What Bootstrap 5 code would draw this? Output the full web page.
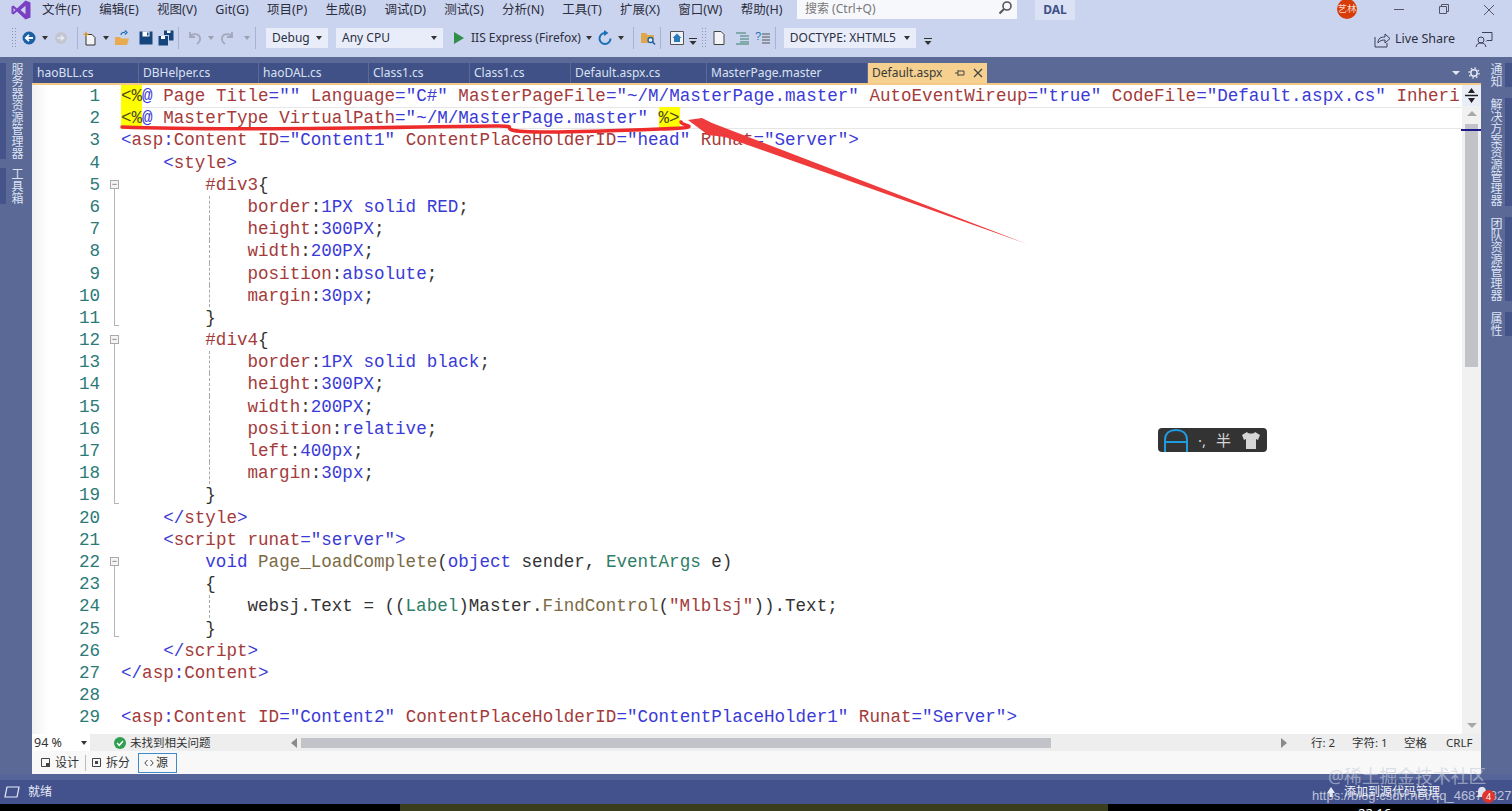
<!DOCTYPE html>
<html lang="zh">
<head>
  <meta charset="UTF-8">
  <title>Default.aspx - Visual Studio</title>
  <meta name="viewport" content="width=device-width, initial-scale=1">
  <link href="https://cdn.jsdelivr.net/npm/bootstrap@5.3.0/dist/css/bootstrap.min.css" rel="stylesheet">
  <style>
    html, body { height: 100%; }
    body {
      background: #5b6996;
      overflow: hidden;
      font-family: "Noto Sans", "Noto Sans CJK SC", sans-serif;
      font-size: 12px;
      color: #2b2f3f;
    }
    .vs-page { height: 811px; position: relative; overflow: hidden; }

    /* title + toolbar */
    .vs-top { background: #cbd4ee; height: 57px; flex: none; }
    .vs-menu { height: 22px; padding-left: 42px; }
    .vs-logo { position: absolute; left: 11px; top: 0; }
    .menu-list { width: 755px; gap: 18.3px; flex: none; }
    .menu-item { white-space: nowrap; line-height: 19px; font-size: 12.5px; flex: none; }
    .vs-search { width: 220px; height: 19px; background: #f7f8fc; color: #777; padding-left: 8px; line-height: 18px; flex: none; }
    .vs-dal { width: 40px; height: 20px; background: #dbe2f6; margin-left: 18px; color: #3f5187; font-weight: 700; line-height: 20px; text-align: center; flex: none; }
    .vs-avatar { width: 20px; height: 20px; border-radius: 50%; background: #d83b07; color: #f7d9cc; font-size: 9.5px; line-height: 20px; text-align: center; margin-left: 262px; flex: none; position: relative; top: -1px; }
    .win-btn { width: 45px; flex: none; }
    .win-first { margin-left: 19px; }
    .vs-tools { height: 35px; padding: 0 0 3px 11px; gap: 4px; }
    .t-grip { width: 6px; height: 22px; flex: none; background-image: radial-gradient(#8d94ad 1px, transparent 1px); background-size: 3px 3px; }
    .t-ic { width: 16px; height: 16px; flex: none; display: block; }
    .t-drop { width: 8px; height: 16px; flex: none; display: flex; align-items: center; justify-content: center; }
    .t-drop::after { content: ""; border: 3px solid transparent; border-top: 4px solid #333; border-bottom: 0; }
    .t-drop-off::after { border-top-color: #9aa0b3; }
    .t-more { width: 8px; height: 8px; flex: none; margin-top: 6px; }
    .t-sep { width: 1px; height: 22px; background: #aab2cf; flex: none; }
    .t-nudge { margin-left: 2px; }
    .t-select { height: 20px; background: #e9edfa; padding: 0 6px; line-height: 20px; font-size: 12px; flex: none; }
    .t-select::after { content: ""; border: 3px solid transparent; border-top: 4px solid #333; border-bottom: 0; }
    .sel-debug { width: 62px; margin-left: 6px; }
    .sel-cpu { width: 107px; margin-left: 4px; }
    .sel-doc { width: 132px; margin-left: 4px; }
    .t-text { white-space: nowrap; font-size: 12px; flex: none; }
    .t-share { font-size: 12.5px; white-space: nowrap; margin-top: 3px; }
    .t-feedback { margin-left: 20px; margin-right: 19px; }

    /* middle */
    .vs-body { flex: 1 1 auto; min-height: 0; background: #5b6996; }
    .side-left { width: 32px; flex: none; padding-top: 6px; position: relative; }
    .side-right { width: 31px; flex: none; padding-top: 6px; position: relative; }
    .side-tab { writing-mode: vertical-rl; color: #dde3f5; font-size: 12px; line-height: 14px; white-space: nowrap; position: relative; }
    .side-left .side-tab { padding-right: 9px; margin-bottom: 9px; }
    .side-left .side-tab::before { content: ""; position: absolute; left: 0; top: 0; bottom: 0; width: 6px; background: #44548a; }
    .side-right .side-tab { padding-right: 10px; margin-bottom: 11px; }
    .side-right .side-tab::after { content: ""; position: absolute; right: 0; top: 0; bottom: 0; width: 7px; background: #44548a; }
    .doc-wrap { flex: 1 1 auto; min-width: 0; padding-top: 6px; }

    .tab-strip { height: 22px; flex: none; padding-left: 1px; border-bottom: 2px solid #f2c987; }
    .doc-tab { height: 20px; background: #3f5187; color: #dbe1f3; line-height: 20px; padding-left: 4px; margin-right: 1px; white-space: nowrap; flex: none; font-size: 12px; }
    .tw-a { width: 105px; } .tw-b { width: 119px; } .tw-c { width: 109px; } .tw-d { width: 100px; }
    .tw-e { width: 135px; } .tw-f { width: 160px; } .tw-g { width: 119px; }
    .doc-tab.is-active { background: #f5d08f; color: #3a3a3a; }
    .tab-tools { width: 50px; gap: 7px; padding-right: 1px; }

    .edit-main { flex: 1 1 auto; min-height: 0; background: #fff; }
    .code-pane { flex: 1 1 auto; min-width: 0; overflow: hidden; background: linear-gradient(90deg, #f1f1f1 0, #fff 16px); }
    .code-row { display: flex; height: 22.2px; line-height: 22.2px; font-family: "Liberation Mono", "Courier New", monospace; font-size: 17.57px; white-space: pre; }
    .ln-num { width: 68px; text-align: right; color: #2b7a78; flex: none; }
    .fold-cell { width: 21px; flex: none; position: relative; }
    .fold-cell.f-line::before, .fold-cell.f-end::before, .fold-cell.f-box::before { content: ""; position: absolute; left: 14px; top: 0; bottom: 0; border-left: 1px solid #b5b5b5; }
    .fold-cell.f-box::before { top: 14px; }
    .fold-cell.f-end::before { bottom: 3px; width: 5px; border-bottom: 1px solid #b5b5b5; }
    .fold-cell.f-box::after { content: "−"; font: 9px/7px "Liberation Sans", sans-serif; color: #666; text-align: center; position: absolute; left: 10px; top: 6px; width: 9px; height: 9px; border: 1px solid #aaa; background: #f4f4f4; }
    .code-text { flex: 1 1 auto; position: relative; color: #333; }
    .code-text.g-dash::before { content: ""; position: absolute; left: 88px; top: 0; bottom: 0; border-left: 1px dashed #aaa; }
    .code-row.is-current .code-text { box-shadow: inset 0 1px 0 #e6e6e6, inset 0 -1px 0 #e6e6e6; }
    .c-b { color: #3a3ad6; } .c-r { color: #a33b3b; } .c-t { color: #2f7d66; } .c-m { color: #7c6a45; }
    .c-y { background: #ffff00; color: #4a4a20; display: inline-block; height: 22.2px; }

    .vs-scroll { width: 19px; flex: none; background: #f1f1f1; position: relative; }
    .split-btn { height: 21px; background: #e8edf8; display: flex; align-items: center; justify-content: center; }
    .scr-up { height: 14px; display: flex; justify-content: center; align-items: center; }
    .scr-down { height: 18px; display: flex; justify-content: center; align-items: center; }
    .scr-up::after { content: ""; border: 5px solid transparent; border-bottom: 5px solid #a9a9a9; border-top: 0; }
    .scr-down::after { content: ""; border: 5px solid transparent; border-top: 5px solid #a9a9a9; border-bottom: 0; }
    .scr-track { flex: 1 1 auto; padding: 4px 3px 0; position: relative; }
    .scr-thumb { height: 243px; background: #c2c3c9; }
    .scr-mark { position: absolute; left: -1px; right: 0; top: 9px; height: 2px; background: #1a1a8c; }

    .edit-stat { height: 17px; background: #eeeeee; flex: none; line-height: 17px; color: #333; font-size: 11.5px; }
    .zoom-box { width: 58px; height: 17px; background: #fff; padding-left: 2px; flex: none; position: relative; font-size: 12.5px; }
    .zoom-box::after { content: ""; position: absolute; right: 3px; top: 7px; border: 3px solid transparent; border-top: 4px solid #333; border-bottom: 0; }
    .stat-ok { margin-left: 24px; width: 177px; flex: none; gap: 4px; }
    .hs-left, .hs-right { width: 0; height: 0; border: 5px solid transparent; flex: none; }
    .hs-left { border-right: 6px solid #8a8a8a; border-left: 0; }
    .hs-right { border-left: 6px solid #8a8a8a; border-right: 0; margin-left: 230px; }
    .hs-thumb { width: 750px; height: 10px; background: #c2c3c9; margin-left: 4px; flex: none; }
    .stat-pos { width: 41px; flex: none; white-space: nowrap; }
    .stat-pos2 { width: 52px; flex: none; white-space: nowrap; }
    .stat-pos3 { width: 42px; flex: none; white-space: nowrap; }
    .edit-views { height: 23px; background: #f8f8f9; flex: none; padding-left: 4px; font-size: 12px; line-height: 22px; color: #333; }
    .view-btn { height: 20px; line-height: 18px; padding: 0 5px; gap: 5px; flex: none; }
    .view-btn.is-on { border: 1px solid #3f8ac9; margin-left: 3px; width: 39px; gap: 2px; }
    .view-div { width: 1px; height: 16px; background: #bbb; flex: none; margin: 0 1px 0 1px; }

    .strip-gap { height: 6px; background: #55659a; flex: none; }
    .vs-status { height: 24px; background: #43528c; color: #e8ecf8; flex: none; padding-left: 4px; font-size: 12px; gap: 8px; }
    .status-add { margin-left: auto; margin-right: 72px; color: #f2f4fb; gap: 8px; white-space: nowrap; }
    .vs-task { height: 7px; flex: none; background: #000; overflow: hidden; color: #fff; font-size: 13px; line-height: 13px; }
    .task-green { margin-left: 400px; width: 708px; background: #3a3e1c; flex: none; }
    .task-time { margin-left: 250px; padding-top: 3px; }

    /* things lying over the window */
    .ime-bar { position: absolute; left: 1158px; top: 428px; width: 109px; height: 24px; background: #333; border-radius: 4px; color: #d6d6d6; font-size: 15px; line-height: 24px; padding-left: 6px; gap: 10px; }
    .mark-over { position: absolute; left: 0; top: 0; pointer-events: none; }
    .wm-title { position: absolute; left: 1328px; top: 765px; color: rgba(200,205,220,.62); font-size: 17.8px; white-space: nowrap; line-height: 22px; }
    .wm-url { position: absolute; left: 1312px; top: 788px; color: rgba(225,228,238,.78); font-family: "Liberation Sans", sans-serif; font-size: 13px; white-space: nowrap; line-height: 16px; }
    .st-badge { position: absolute; left: 1482px; top: 790px; width: 13px; height: 13px; border-radius: 50%; background: #e0332b; color: #fff; font-size: 9px; line-height: 13px; text-align: center; }
    .st-bell { position: absolute; left: 1475px; top: 786px; }
  </style>
</head>
<body>
<div class="vs-page d-flex flex-column">

  <div class="vs-top d-flex flex-column">
    <div class="vs-menu d-flex align-items-start">
      <svg class="vs-logo" width="20" height="20" viewBox="0 0 20 20"><path d="M14.5 0.5 19.5 2.5V17.5L14.5 19.5 6 11.5 2.5 14.5.5 13.5V6.5L2.5 5.5 6 8.5ZM14.5 5.8 9.5 10l5 4.2ZM2.5 8v4L4.5 10Z" fill="#7b3fc4"/></svg>
      <div class="menu-list d-flex">
        <div class="menu-item">文件(F)</div>
        <div class="menu-item">编辑(E)</div>
        <div class="menu-item">视图(V)</div>
        <div class="menu-item">Git(G)</div>
        <div class="menu-item">项目(P)</div>
        <div class="menu-item">生成(B)</div>
        <div class="menu-item">调试(D)</div>
        <div class="menu-item">测试(S)</div>
        <div class="menu-item">分析(N)</div>
        <div class="menu-item">工具(T)</div>
        <div class="menu-item">扩展(X)</div>
        <div class="menu-item">窗口(W)</div>
        <div class="menu-item">帮助(H)</div>
      </div>
      <div class="vs-search d-flex justify-content-between">
        <span>搜索 (Ctrl+Q)</span>
        <svg width="16" height="16" viewBox="0 0 16 16" class="me-1"><circle cx="10" cy="6" r="4" fill="none" stroke="#555" stroke-width="1.6"/><path d="M7 9 2.5 13.5" stroke="#555" stroke-width="2"/></svg>
      </div>
      <div class="vs-dal">DAL</div>
      <div class="vs-avatar">艺林</div>
      <div class="win-btn win-first d-flex justify-content-center"><svg width="12" height="18" viewBox="0 0 12 18"><path d="M1 9.5H11" stroke="#556" stroke-width="1"/></svg></div>
      <div class="win-btn d-flex justify-content-center"><svg width="12" height="18" viewBox="0 0 12 18"><path d="M1.5 6.5h7v7h-7zM3.5 6.5v-2h7v7h-2" fill="none" stroke="#556"/></svg></div>
      <div class="win-btn d-flex justify-content-center"><svg width="12" height="18" viewBox="0 0 12 18"><path d="M1 5 11 15M11 5 1 15" stroke="#556"/></svg></div>
    </div>
    <div class="vs-tools d-flex align-items-center">
      <div class="t-grip"></div>
      <svg class="t-ic" viewBox="0 0 16 16"><circle cx="8" cy="8" r="6.5" fill="#1b5fa5"/><path d="M12 8H5M8 4.8 4.8 8 8 11.2" fill="none" stroke="#fff" stroke-width="1.8"/></svg>
      <div class="t-drop"></div>
      <svg class="t-ic" viewBox="0 0 16 16"><circle cx="8" cy="8" r="6" fill="#c3c6cf"/><path d="M4.5 8h6M8 5.5 10.5 8 8 10.5" fill="none" stroke="#e8eaf2" stroke-width="1.5"/></svg>
      <div class="t-sep ms-1"></div>
      <svg class="t-ic" viewBox="0 0 16 16"><path d="M4 4.5h6l3 3V15H4Z" fill="#f3f4f8" stroke="#333"/><path d="M4 1 5 3.5 7.5 4 5 5 4 7.5 3 5 .5 4 3 3.5Z" fill="#d9962c"/></svg>
      <div class="t-drop"></div>
      <svg class="t-ic" viewBox="0 0 16 16"><path d="M1 7h5l1 1.5h8L13 15H1Z" fill="#e8ab4f"/><path d="M7 5C7 3 9 2 11 2.5M11 .5l2 2-2 2" fill="none" stroke="#1b6fb5" stroke-width="1.3"/></svg>
      <svg class="t-ic ms-1" viewBox="0 0 16 16"><path d="M1.5 1.5h13v13h-13Z" fill="#16457e"/><path d="M4.5 1.5h7v5h-7Z" fill="#fff"/><path d="M9 2.5h1.5v3H9Z" fill="#16457e"/></svg>
      <svg class="t-ic" viewBox="0 0 16 16"><path d="M.5 6h9.500v9.500H.5Z" fill="#16457e"/><path d="M3 6h4v3H3Z" fill="#fff"/><path d="M6 .5h9.500v10H11V5H6Z" fill="#16457e"/><path d="M9 .5h3.500v2.500H9Z" fill="#fff"/></svg>
      <div class="t-sep"></div>
      <svg class="t-ic ms-1" viewBox="0 0 16 16"><path d="M3 2v5h5M3 7c2-4 9-4 10 1 .4 2.500-1 4.500-3 6" fill="none" stroke="#a3a8ba" stroke-width="1.8"/></svg>
      <div class="t-drop t-drop-off"></div>
      <svg class="t-ic" viewBox="0 0 16 16"><path d="M13 2v5H8M13 7C11 3 4 3 3 8c-.4 2.500 1 4.500 3 6" fill="none" stroke="#a3a8ba" stroke-width="1.8"/></svg>
      <div class="t-drop t-drop-off ms-1"></div>
      <div class="t-sep"></div>
      <div class="t-select sel-debug d-flex justify-content-between align-items-center">Debug</div>
      <div class="t-select sel-cpu d-flex justify-content-between align-items-center">Any CPU</div>
      <svg class="t-ic ms-1" viewBox="0 0 16 16"><path d="M3 2 13 8 3 14Z" fill="#2f8f46"/></svg>
      <span class="t-text">IIS Express (Firefox)</span>
      <div class="t-drop"></div>
      <svg class="t-ic" viewBox="0 0 16 16"><path d="M13.500 8.500A5.500 5.500 0 1 1 8 3" fill="none" stroke="#1b6fb5" stroke-width="2"/><path d="M7 0 11.500 3 7 6Z" fill="#1b6fb5"/></svg>
      <div class="t-drop"></div>
      <div class="t-sep ms-1"></div>
      <svg class="t-ic t-nudge" viewBox="0 0 16 16"><path d="M1 3h5l1.500 2H14v8H1Z" fill="#dfa64e"/><circle cx="10.500" cy="10" r="2.500" fill="#e8eefb" stroke="#1b5fa5" stroke-width="1.300"/><path d="M12.500 12 15 14.500" stroke="#1b5fa5" stroke-width="1.600"/></svg>
      <div class="t-sep"></div>
      <svg class="t-ic ms-1" viewBox="0 0 16 16"><path d="M1.500 1.500h13v13h-13Z" fill="#eef1fa" stroke="#555"/><path d="M8 3.500 12.500 8H11v4H5V8H3.500Z" fill="#2a7ab8"/></svg>
      <svg class="t-more" viewBox="0 0 8 8"><path d="M0 1.500h8" stroke="#333"/><path d="M.5 4h7L4 8Z" fill="#333"/></svg>
      <div class="t-grip"></div>
      <svg class="t-ic" viewBox="0 0 16 16"><path d="M3 1.500h7l3 3v10H3Z" fill="#f3f4f8" stroke="#444"/></svg>
      <svg class="t-ic ms-1" viewBox="0 0 16 16"><path d="M1 3h10M5 6h9M5 9h9M5 12h9M1 14h13" stroke="#3d7f6c"/></svg>
      <svg class="t-ic" viewBox="0 0 16 16"><text x="0" y="10" font-size="11" fill="#1b6fb5" font-family="Liberation Sans">?</text><path d="M7 4h8M7 7h8M7 10h8M7 13h8" stroke="#555"/></svg>
      <div class="t-sep"></div>
      <div class="t-select sel-doc d-flex justify-content-between align-items-center">DOCTYPE: XHTML5</div>
      <svg class="t-more ms-1" viewBox="0 0 8 8"><path d="M0 1.500h8" stroke="#333"/><path d="M.5 4h7L4 8Z" fill="#333"/></svg>
      <div class="t-share ms-auto d-flex align-items-center">
        <svg width="18" height="18" viewBox="0 0 18 18"><path d="M2 6v10h12v-4M5 12c0-5 3-6 7-6V3l5 4.500-5 4.500V9c-3 0-5 .5-7 3Z" fill="none" stroke="#3a3f55"/></svg>
        <span class="ms-1">Live Share</span>
        <svg class="t-feedback" width="18" height="18" viewBox="0 0 18 18"><circle cx="6" cy="9" r="3" fill="none" stroke="#3a3f55"/><path d="M1 16c.5-3 2.500-4 5-4s4.500 1 5 4M7 1.500h10v8h-5l-1 1" fill="none" stroke="#3a3f55"/></svg>
      </div>
    </div>
  </div>

  <div class="vs-body d-flex">
    <div class="side-left d-flex flex-column">
      <div class="side-tab">服务器资源管理器</div>
      <div class="side-tab">工具箱</div>
    </div>
    <div class="doc-wrap d-flex flex-column">
      <div class="tab-strip d-flex">
        <div class="doc-tab tw-a">haoBLL.cs</div>
        <div class="doc-tab tw-b">DBHelper.cs</div>
        <div class="doc-tab tw-c">haoDAL.cs</div>
        <div class="doc-tab tw-d">Class1.cs</div>
        <div class="doc-tab tw-d">Class1.cs</div>
        <div class="doc-tab tw-e">Default.aspx.cs</div>
        <div class="doc-tab tw-f">MasterPage.master</div>
        <div class="doc-tab tw-g is-active d-flex justify-content-between pe-1">
          <span>Default.aspx</span>
          <span class="d-flex align-items-center gap-2">
            <svg width="10" height="10" viewBox="0 0 10 10"><path d="M0 5h3M3 2v6M3 3h6M3 7h6M9 3v4" fill="none" stroke="#444"/></svg>
            <svg width="10" height="10" viewBox="0 0 10 10"><path d="M1 1 9 9M9 1 1 9" stroke="#444" stroke-width="1.300"/></svg>
          </span>
        </div>
        <div class="tab-tools ms-auto d-flex align-items-center justify-content-end">
          <svg width="10" height="8" viewBox="0 0 10 8"><path d="M1 2h8L5 6Z" fill="#e4e8f5"/></svg>
          <svg width="12" height="12" viewBox="0 0 12 12"><circle cx="6" cy="6" r="3.200" fill="none" stroke="#e4e8f5" stroke-width="1.500"/><circle cx="6" cy="6" r="5" fill="none" stroke="#e4e8f5" stroke-width="1.400" stroke-dasharray="1.600 2.300"/></svg>
        </div>
      </div>
      <div class="edit-main d-flex">
        <div class="code-pane" id="codePane"></div>
        <div class="vs-scroll d-flex flex-column">
          <div class="split-btn">
            <svg width="13" height="15" viewBox="0 0 13 15"><path d="M0 7.500h13" stroke="#222" stroke-width="1.500"/><path d="M6.500 0 10 5H3ZM6.500 15 3 10h7Z" fill="#222"/></svg>
          </div>
          <div class="scr-up"></div>
          <div class="scr-track"><div class="scr-mark"></div><div class="scr-thumb"></div></div>
          <div class="scr-down"></div>
        </div>
      </div>
      <div class="edit-stat d-flex align-items-center">
        <div class="zoom-box">94 %</div>
        <div class="stat-ok d-flex align-items-center">
          <svg width="12" height="12" viewBox="0 0 12 12"><circle cx="6" cy="6" r="6" fill="#2e9e4f"/><path d="M3 6 5.300 8.300 9 4" fill="none" stroke="#fff" stroke-width="1.500"/></svg>
          <span>未找到相关问题</span>
        </div>
        <div class="hs-left"></div>
        <div class="hs-thumb"></div>
        <div class="hs-right"></div>
        <div class="stat-pos ms-4">行: 2</div>
        <div class="stat-pos2">字符: 1</div>
        <div class="stat-pos3">空格</div>
        <div class="stat-pos3">CRLF</div>
      </div>
      <div class="edit-views d-flex align-items-center">
        <div class="view-btn d-flex align-items-center">
          <svg width="9" height="9" viewBox="0 0 9 9"><path d="M.5.500h8v5h-3v3h-5Z" fill="none" stroke="#444"/><path d="M5 5h4v4H5Z" fill="#444"/></svg>设计
        </div>
        <div class="view-div"></div>
        <div class="view-btn d-flex align-items-center">
          <svg width="9" height="9" viewBox="0 0 9 9"><path d="M.5.500h8v8h-8Z" fill="none" stroke="#444"/><path d="M3 3h3v3H3Z" fill="#444"/></svg>拆分
        </div>
        <div class="view-btn is-on d-flex align-items-center">
          <svg width="10" height="8" viewBox="0 0 10 8"><path d="M3.500 1 .8 4l2.700 3M6.500 1l2.700 3-2.700 3" fill="none" stroke="#444"/></svg><span>源</span>
        </div>
      </div>
    </div>
    <div class="side-right d-flex flex-column">
      <div class="side-tab">通知</div>
      <div class="side-tab">解决方案资源管理器</div>
      <div class="side-tab">团队资源管理器</div>
      <div class="side-tab">属性</div>
    </div>
  </div>

  <div class="strip-gap"></div>
  <div class="vs-status d-flex align-items-center">
    <svg width="16" height="12" viewBox="0 0 16 12"><path d="M3 1h12l-2 10H1Z" fill="none" stroke="#e8ecf8" stroke-width="1.200"/></svg>
    <span>就绪</span>
    <span class="status-add d-flex align-items-center">
      <svg width="10" height="12" viewBox="0 0 10 12"><path d="M5 1 9 7H6.500v4h-3V7H1Z" fill="#e8ecf8"/></svg>添加到源代码管理
    </span>
  </div>
  <div class="vs-task d-flex">
    <div class="task-green"></div>
    <div class="task-time">22:16</div>
  </div>

  <div class="ime-bar d-flex align-items-center">
    <svg width="24" height="24" viewBox="0 0 24 24"><path d="M1 24V12C1 5 6 2 12 2s11 3 11 10v12M1 14h22" fill="none" stroke="#1f9be0" stroke-width="2"/></svg>
    <span>·,</span><span>半</span>
    <svg width="20" height="18" viewBox="0 0 20 18"><path d="M6 1c1 2 7 2 8 0l5 3-2 5-2-1v10H5V8L3 9 1 4Z" fill="#d6d6d6"/></svg>
  </div>

  <svg class="mark-over" width="1512" height="811" viewBox="0 0 1512 811">
    <path d="M122 127C200 130 300 129 420 127S500 126 512 130 610 131 660 129 680 126 681 122" fill="none" stroke="#ee2b2b" stroke-width="3.500" stroke-linecap="round"/>
    <path d="M688 120 702 118 712 123 1027 244 725 137 708 135Z" fill="#ef3b3b"/>
  </svg>
  <div class="wm-title">@稀土掘金技术社区</div>
  <div class="wm-url">https://blog.csdn.net/qq_46874327</div>
  <svg class="st-bell" width="14" height="14" viewBox="0 0 14 14"><path d="M7 1c3 0 4 2 4 5v3l2 2H1l2-2V6c0-3 1-5 4-5Z" fill="#dfe3f0"/></svg>
  <div class="st-badge">4</div>
</div>

<script src="https://cdn.jsdelivr.net/npm/bootstrap@5.3.0/dist/js/bootstrap.bundle.min.js"></script>
<script>
  // [x:text] = coloured run; f = fold column, g = dashed guide
  const lines = [
    { t: '[y:&lt;%][b:@] [r:Page] [r:Title][b:=""] [r:Language][b:="C#"] [r:MasterPageFile][b:="~/M/MasterPage.master"] [r:AutoEventWireup][b:="true"] [r:CodeFile][b:="Default.aspx.cs"] [r:Inheri]' },
    { t: '[y:&lt;%][b:@] [r:MasterType] [r:VirtualPath][b:="~/M/MasterPage.master"] [y:%&gt;]', cur: true },
    { t: '[b:&lt;][r:asp][b::][r:Content] [r:ID][b:="Content1"] [r:ContentPlaceHolderID][b:="head"] [r:Runat][b:="Server"&gt;]' },
    { t: '    [b:&lt;][r:style][b:&gt;]' },
    { t: '        [r:#div3]{', f: 'f-box' },
    { t: '            [r:border]:[b:1PX solid RED];', f: 'f-line', g: 1 },
    { t: '            [r:height]:[b:300PX];', f: 'f-line', g: 1 },
    { t: '            [r:width]:[b:200PX];', f: 'f-line', g: 1 },
    { t: '            [r:position]:[b:absolute];', f: 'f-line', g: 1 },
    { t: '            [r:margin]:[b:30px];', f: 'f-line', g: 1 },
    { t: '        }', f: 'f-end' },
    { t: '        [r:#div4]{', f: 'f-box' },
    { t: '            [r:border]:[b:1PX solid black];', f: 'f-line', g: 1 },
    { t: '            [r:height]:[b:300PX];', f: 'f-line', g: 1 },
    { t: '            [r:width]:[b:200PX];', f: 'f-line', g: 1 },
    { t: '            [r:position]:[b:relative];', f: 'f-line', g: 1 },
    { t: '            [r:left]:[b:400px];', f: 'f-line', g: 1 },
    { t: '            [r:margin]:[b:30px];', f: 'f-line', g: 1 },
    { t: '        }', f: 'f-end' },
    { t: '    [b:&lt;/][r:style][b:&gt;]' },
    { t: '    [b:&lt;][r:script] [r:runat][b:="server"&gt;]' },
    { t: '        [b:void] [m:Page_LoadComplete]([b:object] sender, [t:EventArgs] e)', f: 'f-box' },
    { t: '        {', f: 'f-line' },
    { t: '            websj.Text = (([t:Label])Master.[m:FindControl]([r:"Mlblsj"])).Text;', f: 'f-line', g: 1 },
    { t: '        }', f: 'f-end' },
    { t: '    [b:&lt;/][r:script][b:&gt;]' },
    { t: '[b:&lt;/][r:asp][b::][r:Content][b:&gt;]' },
    { t: '' },
    { t: '[b:&lt;][r:asp][b::][r:Content] [r:ID][b:="Content2"] [r:ContentPlaceHolderID][b:="ContentPlaceHolder1"] [r:Runat][b:="Server"&gt;]' }
  ];

  let html = '';
  lines.forEach((item, i) => {
    const code = item.t.replace(/\[(\w):([^\]]*)\]/g, '<span class="c-$1">$2</span>');
    html += `<div class="code-row${item.cur ? ' is-current' : ''}">
      <span class="ln-num">${i + 1}</span><span class="fold-cell ${item.f || ''}"></span><span class="code-text${item.g ? ' g-dash' : ''}">${code}</span></div>`;
  });
  document.getElementById('codePane').innerHTML = html;
</script>
</body>
</html>
